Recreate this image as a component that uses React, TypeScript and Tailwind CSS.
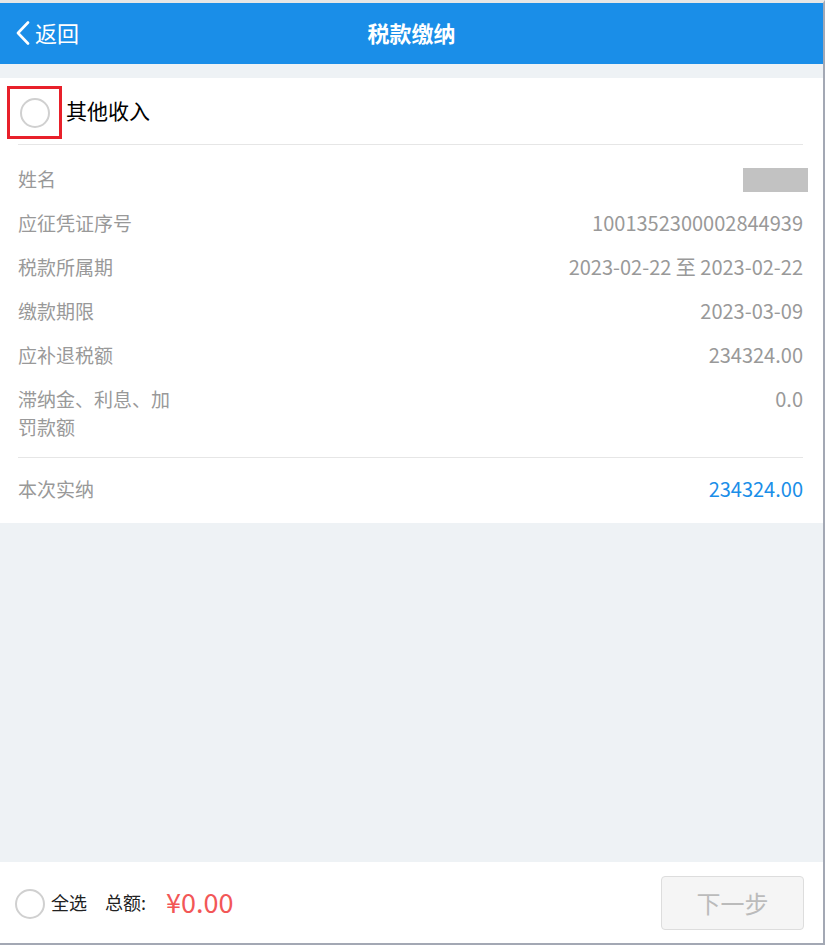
const rows = [
  { label: "应征凭证序号", value: "1001352300002844939" },
  { label: "税款所属期", value: "2023-02-22 至 2023-02-22" },
  { label: "缴款期限", value: "2023-03-09" },
  { label: "应补退税额", value: "234324.00" },
  { label: "滞纳金、利息、加罚款额", value: "0.0" },
];

function Circle({ className }: { className: string }) {
  return <span className={"block shrink-0 rounded-full border-2 border-[#d0d0d0] bg-white " + className} />;
}

export default function App() {
  return (
    <div
      className="flex h-[945px] w-[825px] flex-col border-t-[3px] border-r-2 border-b-2 border-t-[#e6e6e6] border-r-[#a3a8b4] border-b-[#a3a8b4] bg-[#eef2f5]"
      style={{ fontFamily: '"Noto Sans CJK SC", "Noto Sans", sans-serif' }}
    >
      <header className="relative flex h-[61px] shrink-0 items-center bg-[#1a8ee8] pb-[2px] text-white">
        <div className="flex items-center pl-[15px]">
          <svg width="16" height="24" viewBox="0 0 16 24" fill="none">
            <path d="M13 1.5 L3 12 L13 22.5" stroke="white" strokeWidth="2.6" strokeLinecap="round" strokeLinejoin="round" />
          </svg>
          <span className="ml-[4px] text-[22px]">返回</span>
        </div>
        <h1 className="absolute left-1/2 -translate-x-1/2 text-[22px] font-bold">税款缴纳</h1>
      </header>

      <div className="mt-[14px] bg-white">
        <div className="flex h-[66px] items-center pl-[7px] pt-[3px]">
          <div className="flex h-[53px] w-[55px] items-center justify-center border-[3px] border-[#e8202a]">
            <Circle className="h-[30px] w-[30px]" />
          </div>
          <span className="ml-[4px] mb-[4px] text-[21px] text-black">其他收入</span>
        </div>
        <div className="mr-[20px] ml-[18px] h-px bg-[#e6e6e6]" />

        <div className="pt-[12px] pr-[20px] pb-[8px] pl-[18px] text-[19px] leading-[28px] text-[#999999]">
          <div className="flex items-center justify-between py-[8px]">
            <span>姓名</span>
            <span className="-mr-[5px] mt-[2px] block h-[24px] w-[65px] bg-[#c2c2c2]" />
          </div>
          {rows.map((row) => (
            <div key={row.label} className="flex items-start justify-between py-[8px]">
              <span className="w-[160px]">{row.label}</span>
              <span className="text-[20px]">{row.value}</span>
            </div>
          ))}
        </div>
        <div className="mr-[20px] ml-[18px] h-px bg-[#e6e6e6]" />
        <div className="flex h-[65px] items-center justify-between pr-[20px] pb-[3px] pl-[18px] text-[19px] text-[#999999]">
          <span>本次实纳</span>
          <span className="text-[20px] text-[#1a8ee8]">234324.00</span>
        </div>
      </div>

      <div className="flex-1" />

      <footer className="flex h-[81px] shrink-0 items-center bg-white pr-[19px] pl-[15px]">
        <Circle className="mt-[2px] h-[30px] w-[30px]" />
        <span className="ml-[6px] text-[18px] text-[#222222]">全选</span>
        <span className="ml-[18px] text-[18px] text-[#222222]">总额:</span>
        <span className="ml-[20px] text-[27px] text-[#f25757]">¥0.00</span>
        <button className="ml-auto h-[54px] w-[143px] rounded-[4px] border border-[#dddddd] bg-[#f5f5f5] text-[24px] text-[#bbbbbb]">
          下一步
        </button>
      </footer>
    </div>
  );
}
